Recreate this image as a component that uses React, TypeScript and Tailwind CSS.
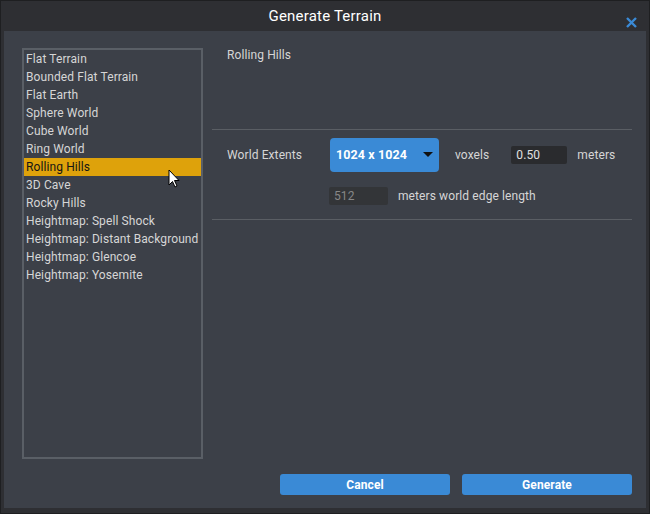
import React from "react";

const terrains = [
  "Flat Terrain",
  "Bounded Flat Terrain",
  "Flat Earth",
  "Sphere World",
  "Cube World",
  "Ring World",
  "Rolling Hills",
  "3D Cave",
  "Rocky Hills",
  "Heightmap: Spell Shock",
  "Heightmap: Distant Background",
  "Heightmap: Glencoe",
  "Heightmap: Yosemite",
];

export default function App() {
  const selected = "Rolling Hills";
  return (
    <div
      className="flex h-[514px] w-[650px] flex-col border border-[#1e1f21] bg-[#2e2f33] text-[12px] tracking-[0.1px] text-[#d6d6d6]"
      style={{ fontFamily: "Roboto, 'Noto Sans', sans-serif" }}
    >
      {/* title bar */}
      <div className="relative flex h-[30px] shrink-0 items-center justify-center">
        <span className="text-[15px] tracking-[0.2px] text-white">Generate Terrain</span>
        <svg className="absolute right-[12px] top-[16px]" width="11" height="11" viewBox="0 0 11 11">
          <path d="M1 1L10 10M10 1L1 10" stroke="#3a8ad6" strokeWidth="2.4" />
        </svg>
      </div>

      <div className="mx-[3px] mb-[5px] flex flex-1 bg-[#3c4048]">
        {/* list */}
        <div className="ml-[18px] mt-[17px] h-[411px] w-[181px] shrink-0 border-2 border-[#5a5f66]">
          {terrains.map((t) => (
            <div
              key={t}
              className={
                "relative flex h-[18px] items-center whitespace-nowrap pl-[2px] " +
                (t === selected ? "bg-[#dea20b] text-[#151515]" : "")
              }
            >
              {t}
              {t === selected && (
                <svg className="absolute left-[144px] top-[11px]" width="12" height="19" viewBox="0 0 12 19">
                  <path d="M1 1V16L4.5 12.5L7 18L9 17L6.5 11.5H11Z" fill="#fff" stroke="#000" strokeWidth="1" />
                </svg>
              )}
            </div>
          ))}
        </div>

        {/* right panel */}
        <div className="ml-[9px] mr-[14px] flex flex-1 flex-col">
          <div className="pl-[15px] pt-[15px]">Rolling Hills</div>
          <div className="mt-[65px] h-px bg-[#5a5e64]" />
          <div className="flex items-center pl-[15px] pt-[8px]">
            <span className="w-[103px]">World Extents</span>
            <div className="flex h-[34px] w-[109px] items-center justify-between rounded-[4px] bg-[#3a8ad6] pl-[6px] pr-[6px]">
              <span className="text-[12.5px] font-bold text-white">1024 x 1024</span>
              <svg width="10" height="6" viewBox="0 0 10 6">
                <path d="M0 0H10L5 5Z" fill="#111" />
              </svg>
            </div>
            <span className="ml-[16px]">voxels</span>
            <div className="ml-[22px] flex h-[18px] w-[56px] items-center rounded-[2px] bg-[#2a2b2e] pl-[5px] text-[#e0e0e0]">
              0.50
            </div>
            <span className="ml-[10px]">meters</span>
          </div>
          <div className="flex items-center pl-[117px] pt-[15px]">
            <div className="flex h-[18px] w-[59px] items-center rounded-[2px] bg-[#333538] pl-[5px] text-[#878787]">
              512
            </div>
            <span className="ml-[10px]">meters world edge length</span>
          </div>
          <div className="mt-[14px] h-px bg-[#5a5e64]" />
          <div className="flex-1" />
          <div className="mb-[13px] flex justify-end gap-[12px]">
            <button className="h-[21px] w-[170px] rounded-[3px] bg-[#3a8ad6] font-bold text-white">Cancel</button>
            <button className="h-[21px] w-[170px] rounded-[3px] bg-[#3a8ad6] font-bold text-white">Generate</button>
          </div>
        </div>
      </div>
    </div>
  );
}
